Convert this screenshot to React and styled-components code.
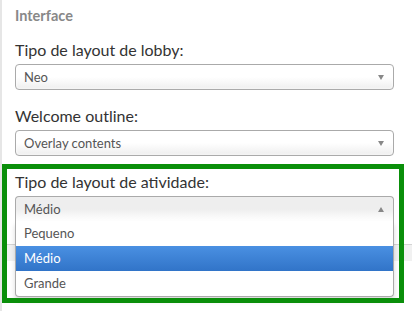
import styled, { createGlobalStyle, css } from "styled-components";

const GlobalStyle = createGlobalStyle`
  html, body {
    margin: 0;
    padding: 0;
    background: #fff;
  }
  body {
    font-family: Lato, "Open Sans", "Liberation Sans", sans-serif;
    -webkit-font-smoothing: antialiased;
  }
  * {
    box-sizing: border-box;
  }
`;

const lobbyOptions = ["Neo"];
const sizeOptions = ["Pequeno", "Médio", "Grande"];

const Field = ({ label, value, open, options, highlighted }) => (
  <FieldGroup $marked={open}>
    <Label>{label}</Label>
    <SelectWrap>
      <SelectBox $open={open}>
        <span>{value}</span>
        <Arrow $up={open} />
      </SelectBox>
      {open && (
        <Dropdown>
          {options.map((opt) => (
            <Option key={opt} $active={opt === highlighted}>
              {opt}
            </Option>
          ))}
        </Dropdown>
      )}
    </SelectWrap>
  </FieldGroup>
);

const App = () => {
  return (
    <>
      <GlobalStyle />
      <Panel>
        <Heading>Interface</Heading>
        <Field label="Tipo de layout de lobby:" value={lobbyOptions[0]} />
        <Field label="Welcome outline:" value="Overlay contents" />
        <Field
          label="Tipo de layout de atividade:"
          value="Médio"
          open
          options={sizeOptions}
          highlighted="Médio"
        />
        <FooterBar />
      </Panel>
    </>
  );
};

const Panel = styled.div`
  position: relative;
  min-height: 311px;
  border-left: 2px solid #e6e6e6;
  padding: 6px 18px 0 13px;
  overflow: hidden;
`;

const Heading = styled.h4`
  margin: 0 0 14px;
  font-size: 14.5px;
  line-height: 20px;
  font-weight: 700;
  color: #888;
`;

const FieldGroup = styled.div`
  position: relative;
  margin-bottom: 16px;
  &:last-of-type {
    margin-bottom: 0;
  }

  ${(p) =>
    p.$marked &&
    css`
      &::after {
        content: "";
        position: absolute;
        top: -8px;
        left: -13px;
        right: -10px;
        bottom: -81px;
        border: 5px solid #0a8f0a;
        pointer-events: none;
        z-index: 3;
      }
    `}
`;

const Label = styled.div`
  font-size: 16px;
  line-height: 20px;
  color: #333;
  margin-bottom: 4px;
`;

const SelectWrap = styled.div`
  position: relative;
`;

const SelectBox = styled.div`
  display: flex;
  align-items: center;
  justify-content: space-between;
  height: 26px;
  padding: 0 9px 0 8px;
  border: 1px solid #aaa;
  border-radius: 4px;
  font-size: 13px;
  color: #555;
  background: linear-gradient(to top, #eee 0%, #fff 50%);
  box-shadow: 0 0 3px #fff inset;

  ${(p) =>
    p.$open &&
    css`
      border-bottom-color: transparent;
      border-radius: 4px 4px 0 0;
      background: linear-gradient(to top, #fff 0%, #eee 50%);
      box-shadow: none;
    `}
`;

const Arrow = styled.i`
  width: 0;
  height: 0;
  border-left: 3.5px solid transparent;
  border-right: 3.5px solid transparent;
  ${(p) =>
    p.$up
      ? css`
          border-bottom: 5px solid #888;
        `
      : css`
          border-top: 5px solid #888;
        `}
`;

const Dropdown = styled.ul`
  position: absolute;
  top: 25px;
  left: 0;
  right: 0;
  margin: 0;
  padding: 0;
  list-style: none;
  background: #fff;
  border: 1px solid #aaa;
  border-top: 0;
  border-radius: 0 0 4px 4px;
  box-shadow: 0 4px 5px rgba(0, 0, 0, 0.15);
  z-index: 2;
`;

const Option = styled.li`
  height: 25px;
  line-height: 25px;
  padding: 0 8px;
  font-size: 13px;
  color: #555;

  ${(p) =>
    p.$active &&
    css`
      color: #fff;
      background: linear-gradient(to bottom, #4a90e2 0%, #3174c8 100%);
    `}
`;

const FooterBar = styled.div`
  height: 17px;
  margin: 22px -18px 0 -15px;
  border-top: 1px solid #d4d4d4;
  background: #f1f1f1;
`;

export default App;
